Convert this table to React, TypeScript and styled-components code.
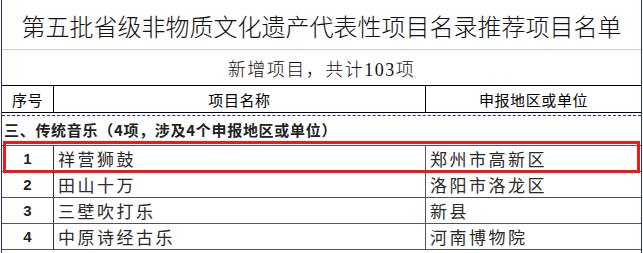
import React from 'react';
import styled, { createGlobalStyle } from 'styled-components';

const GlobalStyle = createGlobalStyle`
  html, body {
    margin: 0;
    padding: 0;
    background: #ffffff;
  }
  body {
    font-family: "Noto Sans CJK SC", "Liberation Sans", sans-serif;
  }
`;

const navy = '#2a2a96';
const cjk = '"Noto Sans CJK SC", sans-serif';

interface Project {
    no: number;
    name: string;
    region: string;
}

const projects: Project[] = [
    { no: 1, name: '祥营狮鼓', region: '郑州市高新区' },
    { no: 2, name: '田山十万', region: '洛阳市洛龙区' },
    { no: 3, name: '三壁吹打乐', region: '新县' },
    { no: 4, name: '中原诗经古乐', region: '河南博物院' },
];

const Sheet = styled.div`
  margin-left: 1px;
  width: 641px;
  height: 253px;
  box-sizing: border-box;
  border-left: 1px solid ${navy};
  border-right: 1px solid ${navy};
  display: flex;
  flex-direction: column;
`;

const TitleRow = styled.div`
  height: 50px;
  border-bottom: 1px solid #d2d2d2;
  display: flex;
  align-items: center;
  justify-content: center;
  font-family: ${cjk};
  font-weight: 300;
  font-size: 24px;
  color: #111;
  padding-top: 1px;
  box-sizing: border-box;
`;

const SubtitleRow = styled.div`
  height: 35px;
  border-bottom: 1px solid #000;
  display: flex;
  align-items: center;
  justify-content: center;
  font-family: "Liberation Serif", ${cjk};
  font-weight: 300;
  font-size: 18px;
  letter-spacing: 1.5px;
  color: #111;
`;

const GridRow = styled.div<{ $line: string }>`
  display: grid;
  grid-template-columns: 52px 372px 1fr;
  border-bottom: 1px solid ${(p) => p.$line};
  position: relative;
`;

const HeadRow = styled(GridRow)`
  height: 26px;
  margin-bottom: 2px;
`;

const HeadCell = styled.div<{ $last?: boolean }>`
  display: flex;
  align-items: center;
  justify-content: center;
  border-right: ${(p) => (p.$last ? 'none' : '1px solid #000')};
  font-family: ${cjk};
  font-weight: 400;
  font-size: 15px;
  letter-spacing: 0.6px;
  color: #000;
`;

const SectionRow = styled.div`
  height: 31px;
  box-sizing: border-box;
  border-top: 1px dashed ${navy};
  border-bottom: 1px solid #555;
  display: flex;
  align-items: center;
  padding-left: 2px;
  padding-bottom: 2px;
  font-family: ${cjk};
  font-weight: 700;
  font-size: 15px;
  letter-spacing: 0.7px;
  color: #222;
`;

const DataRow = styled(GridRow)`
  height: 25px;
`;

const NoCell = styled.div`
  display: flex;
  align-items: center;
  justify-content: center;
  border-right: 1px solid #333;
  font-family: "Liberation Sans", sans-serif;
  font-weight: 700;
  font-size: 15px;
  color: #222;
`;

const TextCell = styled.div<{ $last?: boolean }>`
  display: flex;
  align-items: center;
  padding-left: 4px;
  border-right: ${(p) => (p.$last ? 'none' : '1px solid #555')};
  font-family: ${cjk};
  font-size: 17px;
  letter-spacing: 2.5px;
  color: #2a2a2a;
`;

const Highlight = styled.div`
  position: absolute;
  top: -5px;
  left: 1px;
  right: 1px;
  height: 32px;
  border: 3px solid #f01818;
  box-sizing: border-box;
  pointer-events: none;
`;

export default function App() {
    return (
        <>
            <GlobalStyle />
            <Sheet>
                <TitleRow>第五批省级非物质文化遗产代表性项目名录推荐项目名单</TitleRow>
                <SubtitleRow>新增项目，共计103项</SubtitleRow>
                <HeadRow $line="#000">
                    <HeadCell>序号</HeadCell>
                    <HeadCell>项目名称</HeadCell>
                    <HeadCell $last>申报地区或单位</HeadCell>
                </HeadRow>
                <SectionRow>三、传统音乐（4项，涉及4个申报地区或单位）</SectionRow>
                {projects.map((p, i) => (
                    <DataRow key={p.no} $line="#555">
                        <NoCell>{p.no}</NoCell>
                        <TextCell>{p.name}</TextCell>
                        <TextCell $last>{p.region}</TextCell>
                        {i === 0 && <Highlight />}
                    </DataRow>
                ))}
            </Sheet>
        </>
    );
}
